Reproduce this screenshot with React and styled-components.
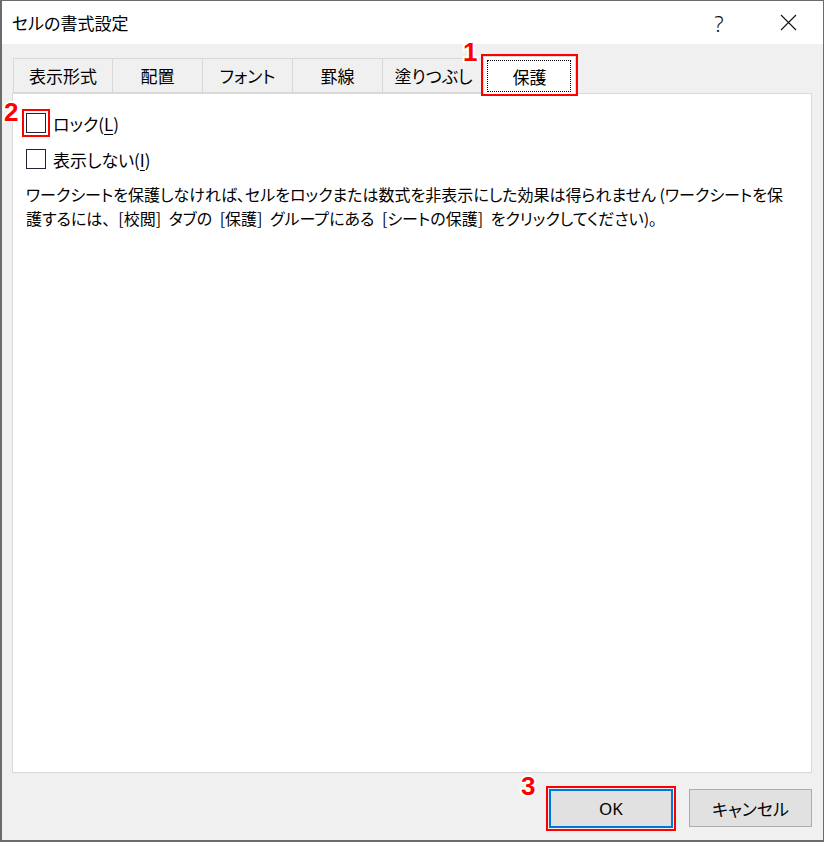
import React from "react";
import styled, { createGlobalStyle } from "styled-components";

const Global = createGlobalStyle`
  html, body { margin: 0; padding: 0; background: #ffffff; }
  * { box-sizing: border-box; }
  body {
    font-family: "Noto Sans CJK JP", "Noto Sans", sans-serif;
    font-feature-settings: "palt" 1;
    color: #000;
  }
`;

const Window = styled.div`
  position: relative;
  width: 824px;
  height: 842px;
  border: 1px solid #6b6b6b;
  border-bottom-width: 2px;
  border-left-width: 2px;
  background: #f0f0f0;
  display: flex;
  flex-direction: column;
  overflow: hidden;
`;

const TitleBar = styled.div`
  height: 43px;
  background: #ffffff;
  display: flex;
  align-items: center;
  padding-left: 10px;
  flex-shrink: 0;
`;

const Title = styled.div`
  font-size: 17px;
  flex: 1;
  margin-top: -1px;
`;

const TitleButton = styled.div`
  width: ${(p) => p.$w}px;
  height: 43px;
  display: flex;
  align-items: center;
  justify-content: center;
  font-family: "Noto Sans", sans-serif;
  font-size: 22px;
  font-weight: 300;
  color: #111;
`;

const Body = styled.div`
  flex: 1;
  display: flex;
  flex-direction: column;
  padding: 12px 11px 12px 10px;
`;

const TabStrip = styled.div`
  display: flex;
  align-items: flex-end;
  height: 38px;
  padding-left: 1px;
  position: relative;
  z-index: 1;
  margin-bottom: -1px;
`;

const Tab = styled.div`
  width: ${(p) => p.$w}px;
  height: ${(p) => (p.$active ? 38 : 35)}px;
  margin: ${(p) => (p.$active ? "0 -2px 0 -2px" : "0 0 1px 0")};
  border: 1px solid #d9d9d9;
  border-left-width: ${(p) => (p.$first || p.$active ? 1 : 0)}px;
  border-bottom: ${(p) => (p.$active ? "none" : "1px solid #d9d9d9")};
  background: ${(p) => (p.$active ? "#ffffff" : "#f0f0f0")};
  display: flex;
  align-items: center;
  justify-content: center;
  font-size: 17px;
  position: relative;
  z-index: ${(p) => (p.$active ? 2 : 1)};
  outline: ${(p) => (p.$active ? "2px solid #ff0000" : "none")};
  outline-offset: 0px;
  padding-top: ${(p) => (p.$active ? 2 : 0)}px;
`;

const FocusRect = styled.span`
  position: absolute;
  left: 3px;
  right: 4px;
  top: 3px;
  bottom: 2px;
  border: 1px dotted #000;
  pointer-events: none;
`;

const Panel = styled.div`
  height: 680px;
  background: #ffffff;
  border: 1px solid #d9d9d9;
  padding: 19px 14px 0 13px;
  display: flex;
  flex-direction: column;
`;

const CheckRow = styled.label`
  display: flex;
  align-items: center;
  gap: 7px;
  height: 20px;
  margin-bottom: ${(p) => p.$mb}px;
  font-size: 17px;
`;

const Box = styled.span`
  width: 20px;
  height: 20px;
  border: 1px solid #222233;
  background: #fff;
  flex-shrink: 0;
  outline: ${(p) => (p.$marked ? "2px solid #ff0000" : "none")};
  outline-offset: 2px;
`;

const Key = styled.span`
  text-decoration: underline;
  text-underline-offset: 3px;
`;

const Para = styled.p`
  margin: 0;
  font-size: 16px;
  line-height: 24px;
  white-space: nowrap;
`;

const Line = styled.span`
  display: block;
  word-spacing: ${(p) => p.$ws || 0}px;
`;

const Wide = styled.span`
  font-feature-settings: normal;
`;

const ButtonRow = styled.div`
  display: flex;
  justify-content: flex-end;
  gap: 16px;
  margin-top: 16px;
`;

const Button = styled.div`
  width: ${(p) => p.$w}px;
  height: ${(p) => (p.$primary ? 39 : 38)}px;
  background: #e1e1e1;
  border: ${(p) => (p.$primary ? "2px solid #0078d7" : "1px solid #adadad")};
  display: flex;
  align-items: center;
  justify-content: center;
  font-size: 17px;
  outline: ${(p) => (p.$primary ? "2px solid #ff0000" : "none")};
  outline-offset: 1px;
`;

const OkText = styled.span`
  font-family: "Noto Sans", sans-serif;
  font-size: 17px;
`;

const Marker = styled.span`
  position: absolute;
  left: ${(p) => p.$x}px;
  top: ${(p) => p.$y}px;
  font-family: "Liberation Sans", Arial, sans-serif;
  font-weight: bold;
  font-size: 26px;
  line-height: 1;
  color: #ff0000;
  -webkit-text-stroke: 4px #ffffff;
  paint-order: stroke fill;
  z-index: 5;
`;

const tabs = [
  { label: "表示形式", w: 100 },
  { label: "配置", w: 90 },
  { label: "フォント", w: 90 },
  { label: "罫線", w: 90 },
  { label: "塗りつぶし", w: 102 },
  { label: "保護", w: 93, active: true },
];

function CloseIcon() {
  return (
    <svg width="17" height="17" viewBox="0 0 17 17">
      <path d="M1 1 L16 16 M16 1 L1 16" stroke="#111" strokeWidth="1.1" fill="none" />
    </svg>
  );
}

export default function App() {
  return (
    <>
      <Global />
      <Window>
        <TitleBar>
          <Title>セルの書式設定</Title>
          <TitleButton $w={68}>?</TitleButton>
          <TitleButton $w={70}>
            <CloseIcon />
          </TitleButton>
        </TitleBar>
        <Body>
          <TabStrip>
            {tabs.map((t, i) => (
              <Tab key={t.label} $w={t.w} $active={t.active} $first={i === 0}>
                {t.label}
                {t.active && <FocusRect />}
              </Tab>
            ))}
          </TabStrip>
          <Panel>
            <CheckRow $mb={16}>
              <Box $marked />
              <span>
                ロック(<Key>L</Key>)
              </span>
            </CheckRow>
            <CheckRow $mb={13}>
              <Box />
              <span>
                表示しない(<Key>I</Key>)
              </span>
            </CheckRow>
            <Para>
              <Line>
                ワークシートを保護しなければ、セルをロックまたは数式を非表示にした効果は得られません (ワークシートを保
              </Line>
              <Line $ws={4}>
                護するには<Wide>、</Wide>[校閲] タブの [保護] グループにある [シートの保護] をクリックしてください)<Wide>。</Wide>
              </Line>
            </Para>
          </Panel>
          <ButtonRow>
            <Button $w={124} $primary>
              <OkText>OK</OkText>
            </Button>
            <Button $w={123}>キャンセル</Button>
          </ButtonRow>
        </Body>
        <Marker $x={461} $y={38}>1</Marker>
        <Marker $x={2} $y={98}>2</Marker>
        <Marker $x={519} $y={772}>3</Marker>
      </Window>
    </>
  );
}
